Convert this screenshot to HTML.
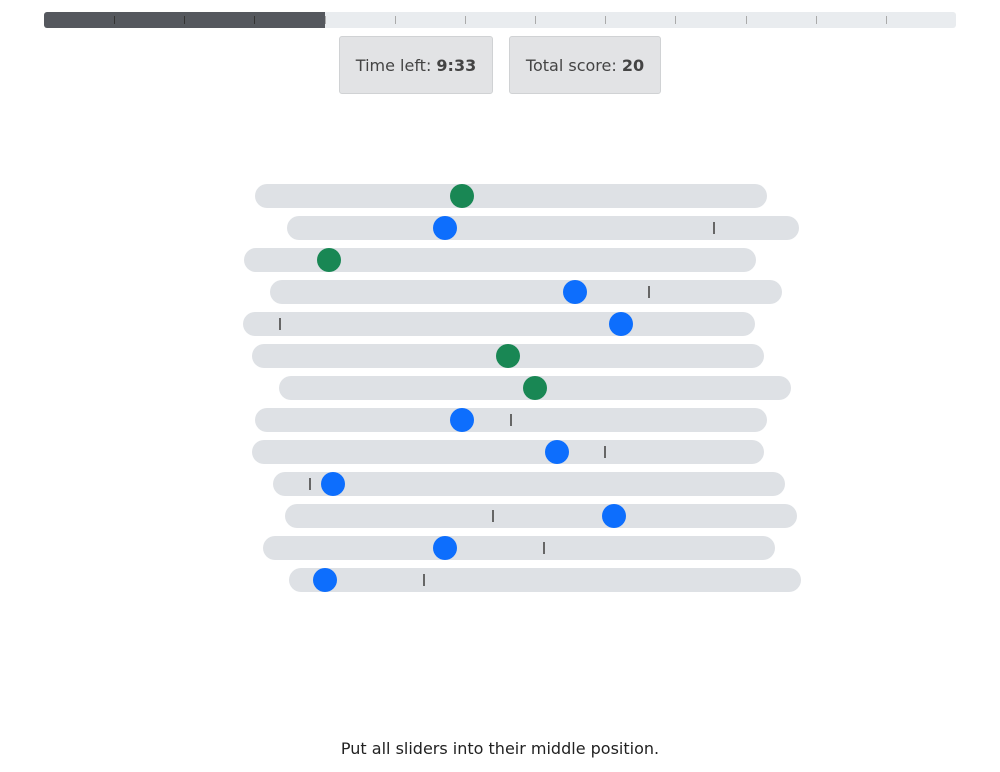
<!DOCTYPE html>
<html><head><style>
body{margin:0;width:1000px;height:772px;background:#fff;font-family:"DejaVu Sans","Liberation Sans",sans-serif;position:relative;overflow:hidden}
.bar{position:absolute;left:44px;top:12px;width:912px;height:16px;background:#e9ecef;border-radius:3px;overflow:hidden}
.fill{position:absolute;left:0;top:0;width:281px;height:16px;background:#55585e}
.bt{position:absolute;top:4px;width:1px;height:8px;background:#aaa}
.box{position:absolute;top:36px;height:56px;background:#e2e3e5;border:1px solid #d0d2d4;border-radius:3px;font-size:16px;color:#444;line-height:58px;text-align:center}
.tr{position:absolute;width:512px;height:24px;border-radius:12px;background:#dee1e5}
.th{position:absolute;width:24px;height:24px;border-radius:50%;top:0}
.tk{position:absolute;width:2px;height:12px;top:6px;background:#666}
.foot{position:absolute;top:739px;width:1000px;text-align:center;font-size:16px;color:#222}
</style></head><body>
<div class="bar"><div class="fill"></div>
<div class="bt" style="left:70px;background:#333"></div><div class="bt" style="left:140px;background:#333"></div><div class="bt" style="left:210px;background:#333"></div><div class="bt" style="left:281px"></div><div class="bt" style="left:351px"></div><div class="bt" style="left:421px"></div><div class="bt" style="left:491px"></div><div class="bt" style="left:561px"></div><div class="bt" style="left:631px"></div><div class="bt" style="left:702px"></div><div class="bt" style="left:772px"></div><div class="bt" style="left:842px"></div>
</div>
<div class="box" style="left:339px;width:152px">Time left: <b>9:33</b></div>
<div class="box" style="left:509px;width:150px">Total score: <b>20</b></div>

<div class="tr" style="left:255px;top:184px"><div class="th" style="left:195px;background:#198754"></div></div>
<div class="tr" style="left:287px;top:216px"><div class="tk" style="left:426px"></div><div class="th" style="left:146px;background:#0d6efd"></div></div>
<div class="tr" style="left:244px;top:248px"><div class="th" style="left:73px;background:#198754"></div></div>
<div class="tr" style="left:270px;top:280px"><div class="tk" style="left:378px"></div><div class="th" style="left:293px;background:#0d6efd"></div></div>
<div class="tr" style="left:243px;top:312px"><div class="tk" style="left:36px"></div><div class="th" style="left:366px;background:#0d6efd"></div></div>
<div class="tr" style="left:252px;top:344px"><div class="th" style="left:244px;background:#198754"></div></div>
<div class="tr" style="left:279px;top:376px"><div class="th" style="left:244px;background:#198754"></div></div>
<div class="tr" style="left:255px;top:408px"><div class="tk" style="left:255px"></div><div class="th" style="left:195px;background:#0d6efd"></div></div>
<div class="tr" style="left:252px;top:440px"><div class="tk" style="left:352px"></div><div class="th" style="left:293px;background:#0d6efd"></div></div>
<div class="tr" style="left:273px;top:472px"><div class="tk" style="left:36px"></div><div class="th" style="left:48px;background:#0d6efd"></div></div>
<div class="tr" style="left:285px;top:504px"><div class="tk" style="left:207px"></div><div class="th" style="left:317px;background:#0d6efd"></div></div>
<div class="tr" style="left:263px;top:536px"><div class="tk" style="left:280px"></div><div class="th" style="left:170px;background:#0d6efd"></div></div>
<div class="tr" style="left:289px;top:568px"><div class="tk" style="left:134px"></div><div class="th" style="left:24px;background:#0d6efd"></div></div>

<div class="foot">Put all sliders into their middle position.</div>
</body></html>
